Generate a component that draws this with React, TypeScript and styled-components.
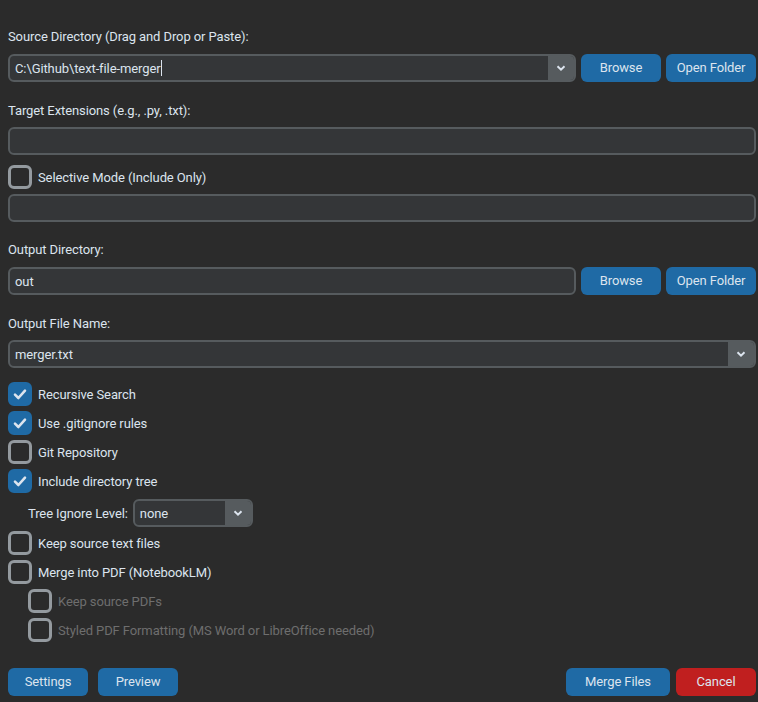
import React from 'react';
import styled, { createGlobalStyle } from 'styled-components';

const GlobalStyle = createGlobalStyle`
  html, body {
    margin: 0;
    padding: 0;
    background: #2b2b2b;
  }
  body {
    font-family: Roboto, "Liberation Sans", Arial, sans-serif;
    font-size: 13px;
    letter-spacing: -0.1px;
    color: #dce4ee;
  }
`;

const Window = styled.div`
  width: 758px;
  height: 702px;
  box-sizing: border-box;
  padding: 0 2px 0 8px;
  display: flex;
  flex-direction: column;
  background: #2b2b2b;
`;

const Label = styled.div<{ $top: number }>`
  margin-top: ${(p) => p.$top}px;
  height: 16px;
  line-height: 16px;
  font-size: 13px;
  color: #dce4ee;
`;

const Row = styled.div<{ $top: number }>`
  margin-top: ${(p) => p.$top}px;
  display: flex;
  align-items: center;
  gap: 5px;
`;

const Entry = styled.div`
  flex: 1;
  height: 28px;
  box-sizing: border-box;
  background: #343638;
  border: 2px solid #565b5e;
  border-radius: 6px;
  padding: 0 5px;
  display: flex;
  align-items: center;
  font-size: 13px;
  color: #dce4ee;
  white-space: nowrap;
  overflow: hidden;
`;

const Combo = styled.div<{ $width?: number }>`
  ${(p) => (p.$width ? `width: ${p.$width}px;` : 'flex: 1;')}
  height: 28px;
  box-sizing: border-box;
  background: #343638;
  border: 2px solid #565b5e;
  border-radius: 6px;
  display: flex;
  align-items: stretch;
  overflow: hidden;
`;

const ComboText = styled.div`
  flex: 1;
  display: flex;
  align-items: center;
  padding: 0 5px;
  color: #dce4ee;
  font-size: 13px;
  white-space: nowrap;
`;

const ComboButton = styled.div`
  width: 26px;
  background: #565b5e;
  display: flex;
  align-items: center;
  justify-content: center;
`;

const Caret = styled.span`
  display: inline-block;
  width: 1px;
  height: 16px;
  background: #dce4ee;
`;

const Button = styled.button<{ $width: number; $danger?: boolean }>`
  width: ${(p) => p.$width}px;
  height: 28px;
  border: none;
  border-radius: 6px;
  background: ${(p) => (p.$danger ? '#c01f1f' : '#1f6aa5')};
  color: #dce4ee;
  font-family: Roboto, "Liberation Sans", Arial, sans-serif;
  font-size: 13px;
  letter-spacing: -0.1px;
  padding: 0 0 2px;
  cursor: pointer;
`;

const CheckRow = styled.label<{ $top: number; $indent?: boolean; $disabled?: boolean }>`
  margin-top: ${(p) => p.$top}px;
  margin-left: ${(p) => (p.$indent ? 20 : 0)}px;
  height: 24px;
  display: flex;
  align-items: center;
  gap: 6px;
  color: ${(p) => (p.$disabled ? '#6e6e6e' : '#dce4ee')};
  font-size: 13px;
`;

const Box = styled.span<{ $checked?: boolean }>`
  width: 24px;
  height: 24px;
  box-sizing: border-box;
  border-radius: 6px;
  border: 3px solid ${(p) => (p.$checked ? '#1f6aa5' : '#949a9f')};
  background: ${(p) => (p.$checked ? '#1f6aa5' : 'transparent')};
  display: flex;
  align-items: center;
  justify-content: center;
`;

const TreeRow = styled.div`
  margin-top: 6px;
  margin-left: 20px;
  display: flex;
  align-items: center;
  gap: 5px;
  font-size: 13px;
`;

const Footer = styled.div`
  margin-top: 26px;
  display: flex;
  align-items: center;
`;

const LeftGroup = styled.div`
  display: flex;
  gap: 10px;
`;

const RightGroup = styled.div`
  margin-left: auto;
  display: flex;
  gap: 6px;
`;

function Chevron() {
  return (
    <svg width="10" height="6" viewBox="0 0 10 6">
      <path d="M1.5 1.2 L5 4.6 L8.5 1.2" fill="none" stroke="#dce4ee" strokeWidth="2" />
    </svg>
  );
}

function Check({ label, checked, top, indent, disabled }: {
  label: string; checked?: boolean; top: number; indent?: boolean; disabled?: boolean;
}) {
  return (
    <CheckRow $top={top} $indent={indent} $disabled={disabled}>
      <Box $checked={checked}>
        {checked && (
          <svg width="16" height="16" viewBox="0 0 16 16">
            <path d="M3 8.6 L6.4 12 L13 4.6" fill="none" stroke="#dce4ee" strokeWidth="2.6" strokeLinecap="round" strokeLinejoin="round" />
          </svg>
        )}
      </Box>
      {label}
    </CheckRow>
  );
}

export default function App() {
  return (
    <Window>
      <GlobalStyle />
      <Label $top={29}>Source Directory (Drag and Drop or Paste):</Label>
      <Row $top={9}>
        <Combo>
          <ComboText>C:\Github\text-file-merger<Caret /></ComboText>
          <ComboButton><Chevron /></ComboButton>
        </Combo>
        <Button $width={80}>Browse</Button>
        <Button $width={90}>Open Folder</Button>
      </Row>

      <Label $top={21}>Target Extensions (e.g., .py, .txt):</Label>
      <Row $top={8}>
        <Entry />
      </Row>
      <Check top={10} label="Selective Mode (Include Only)" />
      <Row $top={5}>
        <Entry />
      </Row>

      <Label $top={20}>Output Directory:</Label>
      <Row $top={9}>
        <Entry>out</Entry>
        <Button $width={80}>Browse</Button>
        <Button $width={90}>Open Folder</Button>
      </Row>

      <Label $top={21}>Output File Name:</Label>
      <Row $top={8}>
        <Combo>
          <ComboText>merger.txt</ComboText>
          <ComboButton><Chevron /></ComboButton>
        </Combo>
      </Row>

      <Check top={14} checked label="Recursive Search" />
      <Check top={5} checked label="Use .gitignore rules" />
      <Check top={5} label="Git Repository" />
      <Check top={5} checked label="Include directory tree" />
      <TreeRow>
        Tree Ignore Level:
        <Combo $width={120}>
          <ComboText>none</ComboText>
          <ComboButton><Chevron /></ComboButton>
        </Combo>
      </TreeRow>
      <Check top={4} label="Keep source text files" />
      <Check top={5} label="Merge into PDF (NotebookLM)" />
      <Check top={5} indent disabled label="Keep source PDFs" />
      <Check top={5} indent disabled label="Styled PDF Formatting (MS Word or LibreOffice needed)" />

      <Footer>
        <LeftGroup>
          <Button $width={80}>Settings</Button>
          <Button $width={80}>Preview</Button>
        </LeftGroup>
        <RightGroup>
          <Button $width={104}>Merge Files</Button>
          <Button $width={80} $danger>Cancel</Button>
        </RightGroup>
      </Footer>
    </Window>
  );
}
